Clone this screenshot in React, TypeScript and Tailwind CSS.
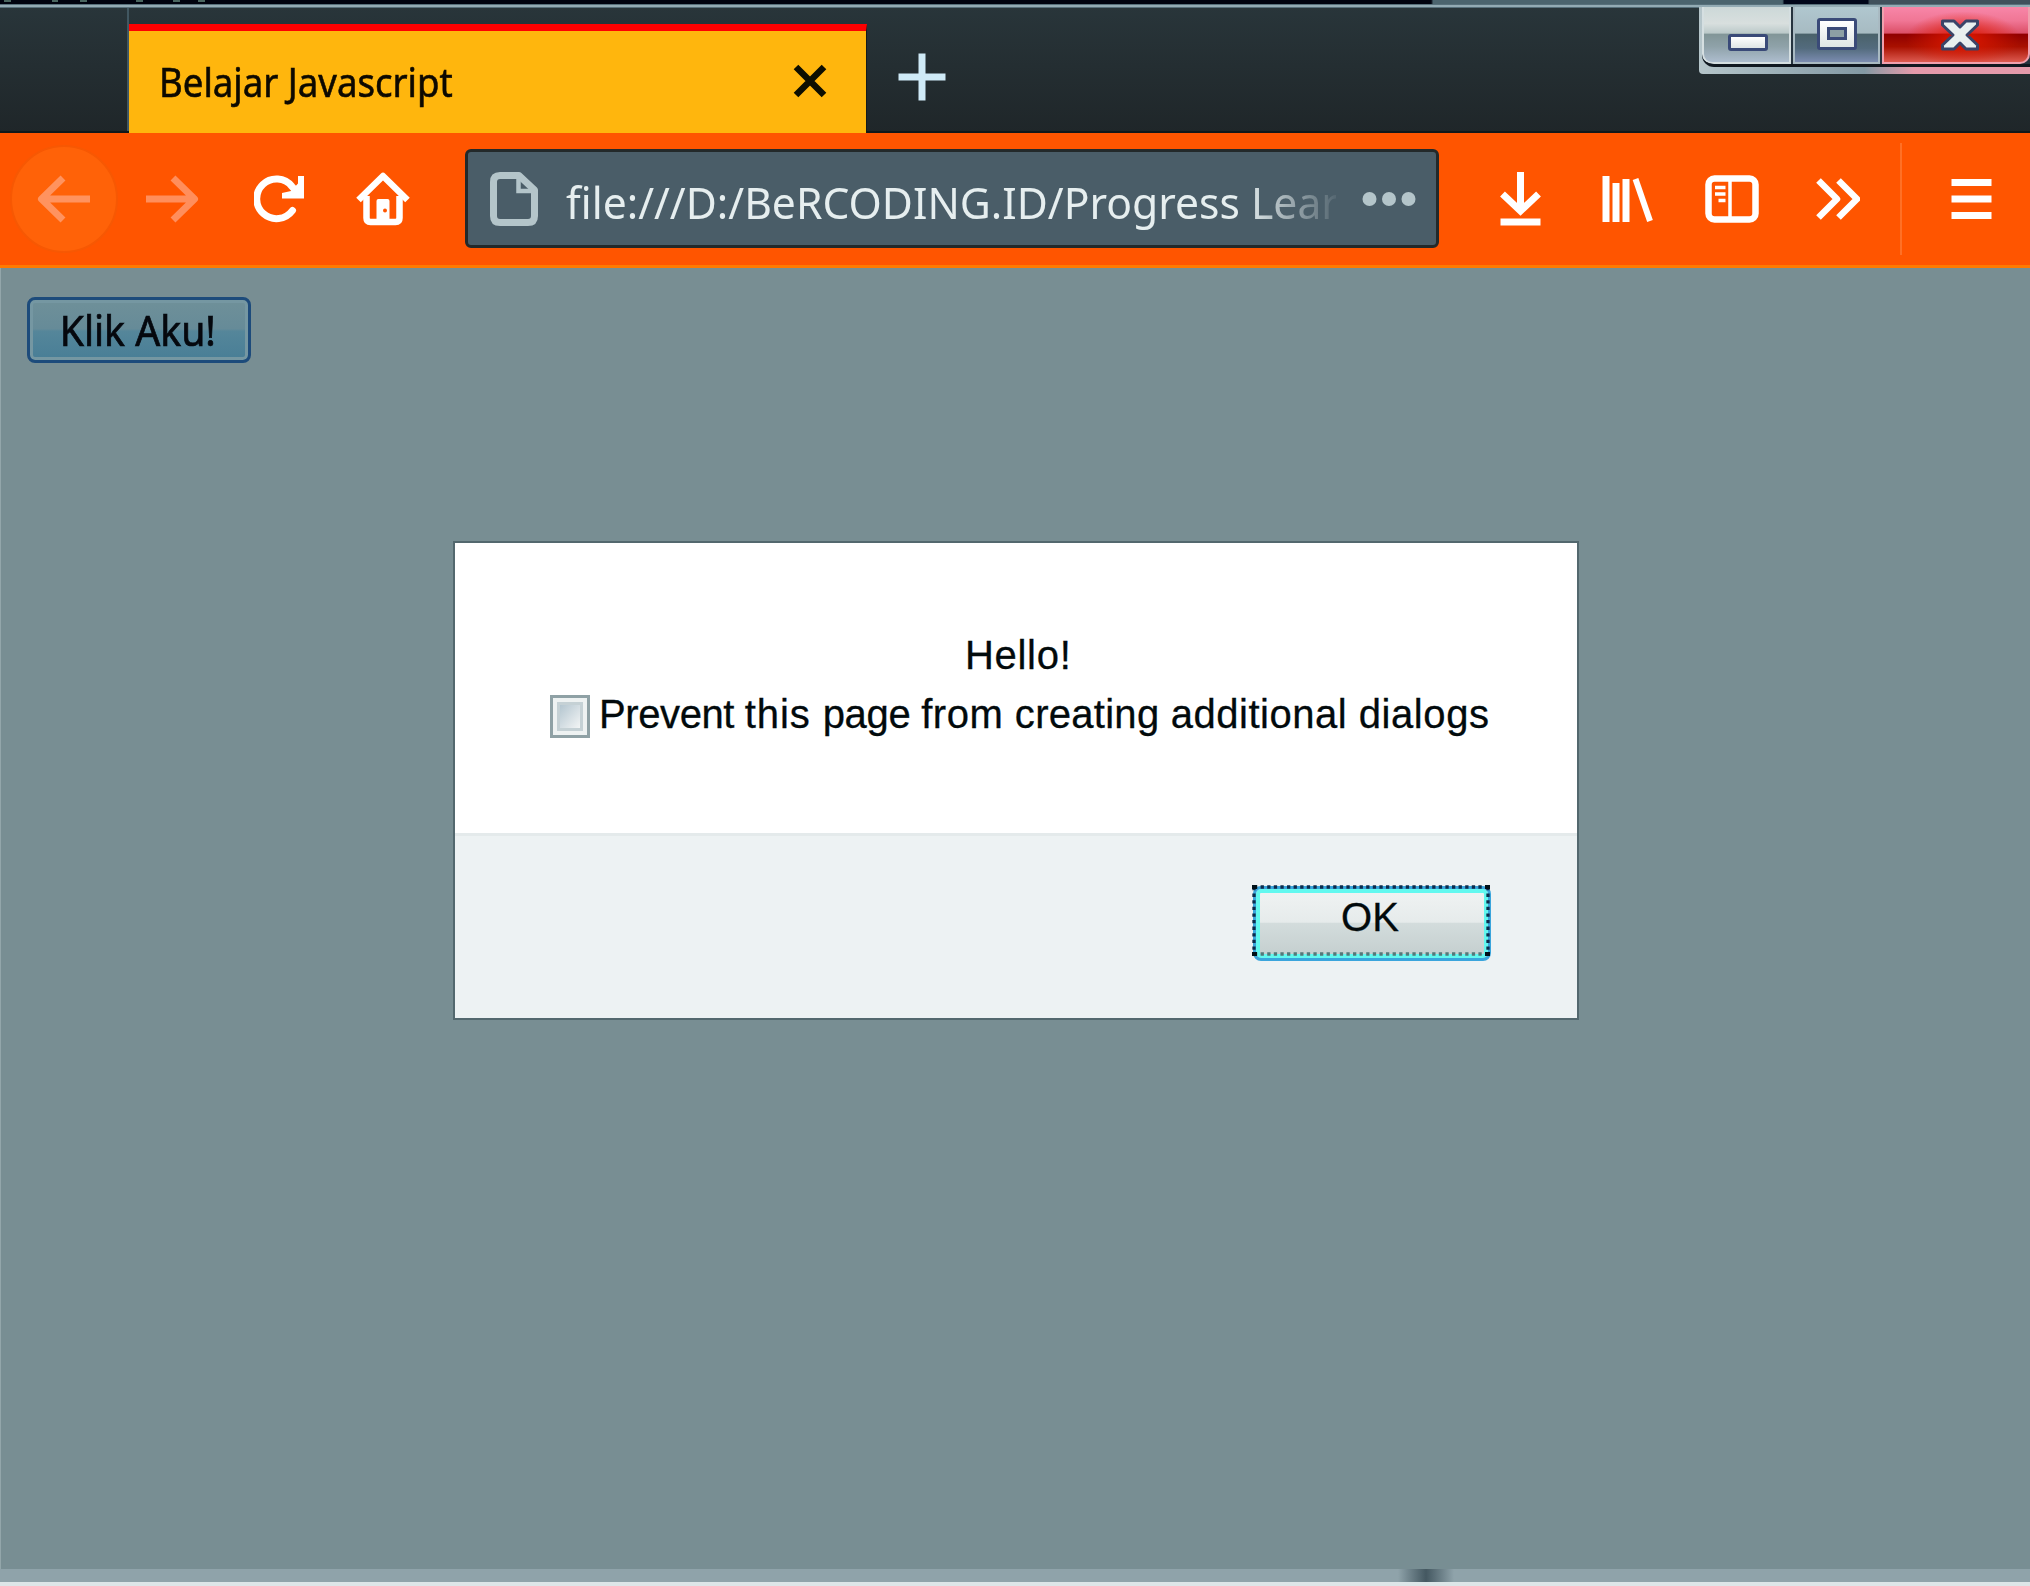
import type { ReactNode } from "react";

type IconProps = { w: number; h: number; className?: string; children: ReactNode };

function Icon({ w, h, className = "", children }: IconProps) {
  return (
    <svg width={w} height={h} viewBox={`0 0 ${w} ${h}`} fill="none" stroke="currentColor" className={`shrink-0 ${className}`}>
      {children}
    </svg>
  );
}

function WindowButtons() {
  return (
    <div className="absolute right-0 top-[7px] flex h-[67px] w-[331px] flex-col rounded-bl-sm bg-linear-to-r from-[#b5c5ca] via-[#8399a4] via-50% to-[#e59aab] to-65% pb-[7px] pl-[3px]">
      <div className="flex h-[60px] overflow-hidden rounded-bl-[12px] border-b-3 border-[#101820] bg-[#26343f]">
        <div className="flex w-[89px] shrink-0 items-center justify-center rounded-bl-[10px] border-2 border-t-0 border-[#d5dfe1] bg-[linear-gradient(180deg,#ccd8d8_0%,#d8dfde_30%,#bccaca_47%,#829698_50%,#8fa2a9_72%,#adbdce_100%)]">
          <div className="ml-[2px] mt-[15px] h-[17px] w-[40px] rounded-[3px] border-3 border-[#3a4a78] bg-linear-to-b from-white to-[#dfe5e5]" />
        </div>
        <div className="ml-[2px] flex w-[87px] shrink-0 items-center justify-center border-2 border-t-0 border-[#a9bac2] bg-[linear-gradient(180deg,#b0c7cf_0%,#a7bbc2_47%,#4a626b_50%,#536b7d_75%,#7b8cb0_100%)]">
          <div className="-mt-[2px] flex h-[32px] w-[40px] items-center justify-center rounded-[3px] border-3 border-[#3a4a78] bg-linear-to-b from-white to-[#dfe5e5]">
            <div className="h-[13px] w-[20px] border-3 border-[#3a4a78] bg-[#8c9fa4]" />
          </div>
        </div>
        <div className="ml-[2px] flex grow items-center justify-center rounded-br-[10px] border-2 border-t-0 border-[#f0a0ae] bg-[radial-gradient(ellipse_40%_50%_at_55%_58%,#e01800_0%,#e0180000_100%),linear-gradient(180deg,#f886a8_0%,#f07695_25%,#dc5068_47%,#900000_50%,#a81000_72%,#dd5a50_100%)]">
          <Icon w={40} h={34} className="ml-[8px]">
            <path d="M2.500 3H14L20 9L26 3H37.500V7L27 17L37.500 27V31H26L20 25L14 31H2.500V27L13 17L2.500 7Z" fill="#e9efef" stroke="#3a4468" strokeWidth="3" strokeLinejoin="round" />
          </Icon>
        </div>
      </div>
    </div>
  );
}

function TitleBar() {
  return (
    <header className="relative flex h-[133px] shrink-0 flex-col bg-linear-to-b from-[#29363b] to-[#1f2629] font-['Noto_Sans',sans-serif]">
      <div className="flex h-[4px] shrink-0 items-start bg-[linear-gradient(90deg,#00030f_0%,#00030f_70.5%,#4b646e_70.6%,#4b646e_87.8%,#00061a_87.9%,#00061a_92%,#40515c_92.1%,#40515c_100%)]">
        <div className="ml-[4px] h-[2px] w-[7px] bg-[#4a6660]" />
        <div className="ml-[41px] h-[2px] w-[6px] bg-[#4a6660]" />
        <div className="ml-[22px] h-[2px] w-[7px] bg-[#4a6660]" />
        <div className="ml-[49px] h-[2px] w-[7px] bg-[#4a6660]" />
        <div className="ml-[30px] h-[2px] w-[7px] bg-[#4a6660]" />
        <div className="ml-[18px] h-[2px] w-[7px] bg-[#4a6660]" />
      </div>
      <div className="h-[4px] shrink-0 border-y border-[#57707b] bg-[#93abb4]" />
      <div className="flex grow border-b-2 border-[#12181a]">
        <div className="w-[129px] shrink-0 border-r-2 border-[#415761]" />
        <div className="-mb-[2px] mt-[16px] flex w-[738px] shrink-0 items-center justify-between border-r border-t-7 border-r-[#151a18] border-t-[#ff0000] bg-[#ffb60d] pl-[30px] pr-[39px]">
          <span className="-mt-[1px] inline-block origin-left scale-x-[0.914] whitespace-nowrap text-[40px] leading-none text-[#0d0900] [-webkit-text-stroke:0.6px_#0d0900]">Belajar Javascript</span>
          <Icon w={34} h={34} className="-mt-[3px] text-[#0d0e00]">
            <path d="M3 3L31 31M31 3L3 31" strokeWidth="6.5" />
          </Icon>
        </div>
        <Icon w={48} h={48} className="ml-[31px] mt-[45px] text-[#cfeaf7]">
          <path d="M0.500 24H47.500M24 0.500V47.500" strokeWidth="7" />
        </Icon>
      </div>
      <WindowButtons />
    </header>
  );
}

function ToolBar() {
  return (
    <nav className="flex h-[135px] shrink-0 items-center border-b-3 border-[#ff7a00] bg-[#ff5500] pb-[1px] text-white">
      <div className="ml-[10px] flex size-[108px] shrink-0 items-center justify-center rounded-full border-2 border-[#f75803] bg-[#ff6208]">
        <Icon w={54} h={48} className="text-[#ff935f]">
          <path d="M4 24H53M26 3L4.500 24L26 45" strokeWidth="7" strokeLinejoin="round" />
        </Icon>
      </div>
      <Icon w={54} h={48} className="ml-[27px] text-[#ff8e5c]">
        <path d="M1 24H50M28 3L49.500 24L28 45" strokeWidth="7" strokeLinejoin="round" />
      </Icon>
      <Icon w={51} h={48} className="ml-[55px]">
        <path d="M38.500 35.500A19.800 19.800 0 1 1 38 11.500L41 15" strokeWidth="7" strokeLinecap="round" />
        <path d="M50 1V23.500H28V18L37 16L44 8.500V1Z" fill="currentColor" stroke="none" />
      </Icon>
      <Icon w={54} h={54} className="ml-[51px]">
        <path d="M2.500 28L27 4L51.500 28" strokeWidth="6.500" strokeLinejoin="round" />
        <path d="M10.500 24V46Q10.500 50 14.500 50H39.500Q43.500 50 43.500 46V24" strokeWidth="6.500" />
        <path d="M20.500 51V29Q20.500 27 22.500 27H31.500Q33.500 27 33.500 29V51Z" fill="currentColor" stroke="none" />
        <circle cx="29" cy="38.500" r="2" fill="#ff5500" stroke="none" />
      </Icon>
      <div className="ml-[55px] flex h-[99px] w-[974px] shrink-0 items-center rounded-[6px] border-3 border-[#23292a] bg-[#4a5d68] pl-[22px] pr-[20px] font-['Noto_Sans',sans-serif]">
        <Icon w={48} h={54} className="text-[#b4c5ca]">
          <path d="M10 3.500H29L44.500 18V44Q44.500 50.500 38 50.500H10Q3.500 50.500 3.500 44V10Q3.500 3.500 10 3.500Z" strokeWidth="7" strokeLinejoin="round" />
          <path d="M28.500 4V19H44" strokeWidth="4.500" />
        </Icon>
        <div className="ml-[28px] w-[770px] shrink-0 overflow-hidden mask-[linear-gradient(90deg,#000_88%,transparent_101%)]">
          <span className="mt-[6px] inline-block origin-left scale-x-[0.969] whitespace-nowrap text-[44px] leading-[60px] text-[#e6eeef]">file:///D:/BeRCODING.ID/Progress Lear</span>
        </div>
        <Icon w={54} h={16} className="ml-auto text-[#b4c5ca]">
          <circle cx="7.500" cy="8" r="7" fill="currentColor" stroke="none" />
          <circle cx="27" cy="8" r="7" fill="currentColor" stroke="none" />
          <circle cx="46.500" cy="8" r="7" fill="currentColor" stroke="none" />
        </Icon>
      </div>
      <Icon w={41} h={54} className="ml-[61px]">
        <path d="M20.500 0V38M2.500 22L20.500 39L38.500 22M0.500 50H40.500" strokeWidth="7" />
      </Icon>
      <Icon w={52} h={48} className="ml-[61px]">
        <path d="M4 1V47M14 8V47M24 4V47" strokeWidth="7" />
        <path d="M33.500 4L48 46" strokeWidth="6" />
      </Icon>
      <Icon w={54} h={48} className="ml-[51px]">
        <rect x="3.500" y="3.500" width="47" height="41" rx="6" strokeWidth="6.500" />
        <path d="M25 4V44" strokeWidth="3.500" />
        <path d="M10 12.500H20.500M10 19H20.500M13.500 25.500H20.500" strokeWidth="3.500" />
      </Icon>
      <Icon w={44} h={42} className="ml-[57px]">
        <path d="M2.500 2.500L21 21L2.500 39.500M22.500 2.500L41 21L22.500 39.500" strokeWidth="6.500" strokeLinejoin="round" />
      </Icon>
      <div className="ml-[40px] h-[112px] w-[2px] bg-[#ff7026]" />
      <Icon w={41} h={42} className="ml-[49px]">
        <path d="M0.500 4.500H40.500M0.500 21H40.500M0.500 37.500H40.500" strokeWidth="7" />
      </Icon>
    </nav>
  );
}

function AlertDialog() {
  return (
    <section className="absolute left-[454px] top-[275px] flex h-[475px] w-[1122px] flex-col bg-white font-['Liberation_Sans',Arial,sans-serif] text-[40px] text-[#020a0c] shadow-[0_0_0_2px_#53686e] [-webkit-text-stroke:0.3px_#020a0c]">
      <div className="flex h-[290px] shrink-0 flex-col pt-[82px]">
        <p className="ml-[510px] h-[59px] whitespace-nowrap leading-[60px] tracking-[0.7px]">Hello!</p>
        <label className="ml-[95px] flex h-[60px] items-center whitespace-nowrap leading-[60px] tracking-[0.28px]">
          <span className="mr-[9px] mt-[4px] flex h-[43px] w-[40px] shrink-0 items-center justify-center border-3 border-[#8fa1a5] bg-[#eef2f2]">
            <span className="h-[29px] w-[26px] border-3 border-[#c5d1d5] bg-linear-to-br from-[#b4c6d0] to-[#f3f5f5]" />
          </span>
          <span className="whitespace-pre">
            <span className="tracking-[-0.4px]">Prevent </span>
            <span className="tracking-[0.9px]">this </span>
            <span className="tracking-[-0.3px]">page </span>
            <span className="tracking-[0.5px]">from </span>
            <span>creating </span>
            <span className="tracking-[0.5px]">additional </span>
            <span className="tracking-[0.6px]">dialogs</span>
          </span>
        </label>
      </div>
      <div className="flex grow items-start justify-end border-t-3 border-[#e4eaeb] bg-[#edf2f3] pr-[86px] pt-[50px]">
        <button className="relative flex h-[75px] w-[238px] justify-center rounded-[8px] border-3 border-[#3aa5dc] bg-[linear-gradient(180deg,#f0f3f3_0%,#e6ebeb_48%,#d3dcdc_50%,#c3cece_100%)] pr-[4px] leading-[56px] shadow-[inset_0_0_0_4px_#62f8ef]">
          OK
          <svg width="238" height="72" viewBox="0 0 238 72" fill="none" className="absolute -left-[4px] -top-[4px]">
            <path d="M2 2H236M2 2V69M236 2V69" stroke="#0b2c4c" strokeWidth="3.300" strokeDasharray="3.300 3.300" />
            <path d="M2 69H236" stroke="#53797a" strokeWidth="3.300" strokeDasharray="3.300 3.300" />
            <path d="M0 2H5M233 2H238M0 69H5M233 69H238" stroke="#001018" strokeWidth="4" />
          </svg>
        </button>
      </div>
    </section>
  );
}

export default function App() {
  return (
    <div className="flex h-[1586px] w-[2030px] flex-col overflow-hidden">
      <TitleBar />
      <ToolBar />
      <main className="relative grow border-l border-[#93a6aa] bg-[#788e93] pl-[26px] pt-[29px]">
        <button className="flex h-[66px] w-[224px] items-center justify-center rounded-[8px] border-3 border-[#1d4b7b] bg-[linear-gradient(180deg,#6f9099_0%,#668b98_48%,#55869a_52%,#487e96_100%)] pr-[3px] font-['Noto_Sans',sans-serif] text-[41px] text-[#05080e] shadow-[inset_0_0_0_3px_#7597a2] [-webkit-text-stroke:0.7px_#05080e]">
          <span className="inline-block scale-x-[0.955] whitespace-nowrap leading-none">Klik Aku!</span>
        </button>
        <AlertDialog />
      </main>
      <footer className="flex h-[17px] shrink-0 border-b-4 border-[#dde6e8] bg-[#8fa3aa]">
        <div className="ml-[1398px] w-[56px] bg-linear-to-r from-[#8fa3aa] via-[#445861] to-[#8fa3aa]" />
      </footer>
    </div>
  );
}
